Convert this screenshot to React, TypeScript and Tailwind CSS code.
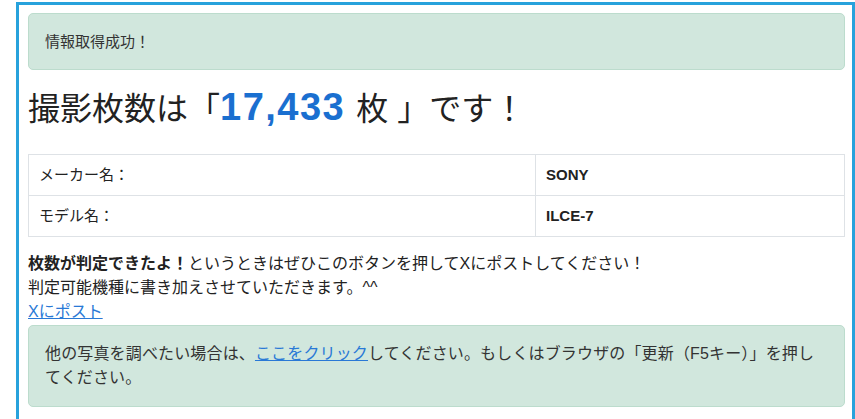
import React from 'react';

interface SpecRow {
  label: string;
  value: string;
}

const specs: SpecRow[] = [
  { label: 'メーカー名：', value: 'SONY' },
  { label: 'モデル名：', value: 'ILCE-7' },
];

const App: React.FC = () => {
  return (
    <div className="min-h-screen bg-white font-['Liberation_Sans','Noto_Sans_CJK_JP',sans-serif] text-[#222]">
      <div className="ml-4 mt-[2px] w-[839px] border-[3px] border-[#27a2dc] pl-[9px] pr-[7px] pt-[8px] pb-10">
        {/* result banner */}
        <div className="rounded-[5px] border border-[#bcdccd] bg-[#d1e7dd] px-4 pt-4 pb-[15px] text-[15px] leading-6 text-[#333]">
          情報取得成功！
        </div>

        <h1 className="mt-[18px] text-[32px] leading-[40px] font-normal">
          撮影枚数は「
          <span className="text-[38px] leading-none font-bold tracking-[1.5px] text-[#1a6fd0]">17,433</span>{' '}
          <span className="ml-[2px]">枚</span>
          <span className="ml-[9px]">」</span>です！
        </h1>

        <table className="mt-[25px] w-full border-collapse border border-[#dee2e6] text-[15px] leading-6">
          <tbody>
            {specs.map((row) => (
              <tr key={row.label}>
                <td className="w-[507px] border border-[#dee2e6] px-[10px] py-2">{row.label}</td>
                <td className="border border-[#dee2e6] px-[10px] py-2 font-bold">{row.value}</td>
              </tr>
            ))}
          </tbody>
        </table>

        <p className="mt-[15px] text-[16px] leading-6">
          <strong className="font-bold">枚数が判定できたよ！</strong>
          というときはぜひこのボタンを押してXにポストしてください！
          <br />
          判定可能機種に書き加えさせていただきます。^^
          <br />
          <a href="#" className="text-[#2979d6] underline">
            Xにポスト
          </a>
        </p>

        {/* reload hint */}
        <div className="mt-[1px] rounded-[5px] border border-[#bcdccd] bg-[#d1e7dd] pl-4 pr-5 py-4 text-[16px] leading-6 tracking-[0.15px] text-[#333]">
          他の写真を調べたい場合は、
          <a href="#" className="text-[#2979d6] underline">
            ここをクリック
          </a>
          してください。もしくはブラウザの「更新（F5キー）」を押してください。
        </div>
      </div>
    </div>
  );
};

export default App;
